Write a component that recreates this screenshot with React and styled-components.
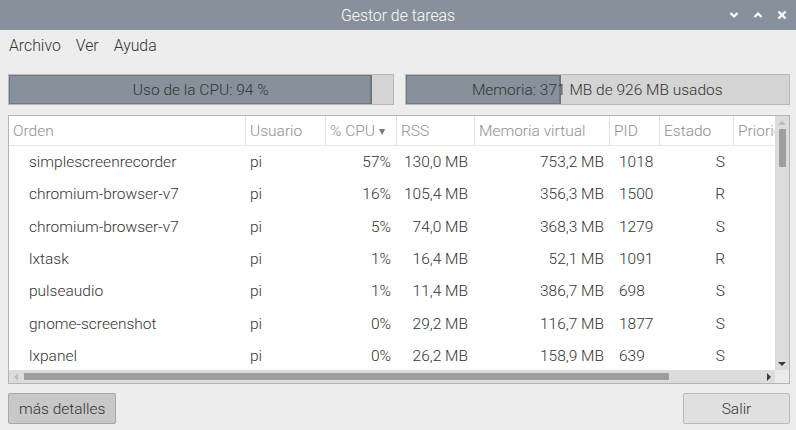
import React from 'react'
import styled, { createGlobalStyle } from 'styled-components'

const GlobalStyle = createGlobalStyle`
  html, body {
    margin: 0;
    padding: 0;
    background: #ededed;
  }
  body {
    font-family: Roboto, "Noto Sans", "Liberation Sans", sans-serif;
    font-size: 15.5px;
    font-weight: 300;
    color: #333;
  }
`;

const columns = [
  { key: 'name', label: 'Orden', width: 236, align: 'left', pad: '0 0 0 20px' },
  { key: 'user', label: 'Usuario', width: 80, align: 'left', pad: '0 0 0 5px' },
  { key: 'cpu', label: '% CPU', width: 71, align: 'right', pad: '0 5px 0 0', sorted: true },
  { key: 'rss', label: 'RSS', width: 78, align: 'right', pad: '0 6px 0 0' },
  { key: 'vm', label: 'Memoria virtual', width: 135, align: 'right', pad: '0 5px 0 0' },
  { key: 'pid', label: 'PID', width: 50, align: 'left', pad: '0 0 0 10px' },
  { key: 'state', label: 'Estado', width: 74, align: 'right', pad: '0 8px 0 0' },
  { key: 'prio', label: 'Prioridad', width: 80, align: 'left', pad: '0' },
];

const processes = [
  { name: 'simplescreenrecorder', user: 'pi', cpu: '57%', rss: '130,0 MB', vm: '753,2 MB', pid: '1018', state: 'S' },
  { name: 'chromium-browser-v7', user: 'pi', cpu: '16%', rss: '105,4 MB', vm: '356,3 MB', pid: '1500', state: 'R' },
  { name: 'chromium-browser-v7', user: 'pi', cpu: '5%', rss: '74,0 MB', vm: '368,3 MB', pid: '1279', state: 'S' },
  { name: 'lxtask', user: 'pi', cpu: '1%', rss: '16,4 MB', vm: '52,1 MB', pid: '1091', state: 'R' },
  { name: 'pulseaudio', user: 'pi', cpu: '1%', rss: '11,4 MB', vm: '386,7 MB', pid: '698', state: 'S' },
  { name: 'gnome-screenshot', user: 'pi', cpu: '0%', rss: '29,2 MB', vm: '116,7 MB', pid: '1877', state: 'S' },
  { name: 'lxpanel', user: 'pi', cpu: '0%', rss: '26,2 MB', vm: '158,9 MB', pid: '639', state: 'S' },
];

const gridTemplate = columns.map(c => `${c.width}px`).join(' ');

function Chevron({ up }) {
  return (
    <svg width="10" height="8" viewBox="0 0 10 8">
      <path d={up ? 'M1.5 6 L5 2.5 L8.5 6' : 'M1.5 2 L5 5.5 L8.5 2'} stroke="#fff" strokeWidth="2.2" fill="none" />
    </svg>
  );
}

function Cross() {
  return (
    <svg width="10" height="10" viewBox="0 0 10 10">
      <path d="M1.5 1.5 L8.5 8.5 M8.5 1.5 L1.5 8.5" stroke="#fff" strokeWidth="2.4" fill="none" />
    </svg>
  );
}

function Arrow({ dir, dark }) {
  const paths = {
    up: 'M0 5 L4 1 L8 5 Z',
    down: 'M0 1 L4 5 L8 1 Z',
    left: 'M5 0 L1 4 L5 8 Z',
    right: 'M1 0 L5 4 L1 8 Z',
  };
  const vertical = dir === 'up' || dir === 'down';
  return (
    <svg width={vertical ? 8 : 6} height={vertical ? 6 : 8} viewBox={vertical ? '0 0 8 6' : '0 0 6 8'}>
      <path d={paths[dir]} fill={dark ? '#3a3a3a' : '#bdbdbd'} />
    </svg>
  );
}

function UsageBar({ percent, label }) {
  return (
    <Bar>
      <BarFill style={{ width: `${percent}%` }} />
      <BarLabel>{label}</BarLabel>
    </Bar>
  );
}

export default function App() {
  return (
    <Window>
      <GlobalStyle />
      <TitleBar>
        <Title>Gestor de tareas</Title>
        <TitleButtons>
          <TitleButton><Chevron /></TitleButton>
          <TitleButton><Chevron up /></TitleButton>
          <TitleButton><Cross /></TitleButton>
        </TitleButtons>
      </TitleBar>

      <MenuBar>
        <MenuItem>Archivo</MenuItem>
        <MenuItem>Ver</MenuItem>
        <MenuItem>Ayuda</MenuItem>
      </MenuBar>

      <Content>
        <Bars>
          <UsageBar percent={94.5} label="Uso de la CPU: 94 %" />
          <UsageBar percent={40.2} label="Memoria: 371 MB de 926 MB usados" />
        </Bars>

        <TableFrame>
          <Viewport>
            <HeaderRow>
              {columns.map((c, i) => (
                <HeaderCell key={c.key} $first={i === 0}>
                  {c.label}
                  {c.sorted && <SortArrow>▾</SortArrow>}
                </HeaderCell>
              ))}
            </HeaderRow>
            {processes.map((p, r) => (
              <Row key={r}>
                {columns.map(c => (
                  <Cell key={c.key} $align={c.align} $pad={c.pad}>{p[c.key]}</Cell>
                ))}
              </Row>
            ))}
          </Viewport>

          <VScroll>
            <ArrowBox><Arrow dir="up" /></ArrowBox>
            <VTrack><VThumb /></VTrack>
            <ArrowBox><Arrow dir="down" dark /></ArrowBox>
          </VScroll>

          <HScroll>
            <ArrowBox $h><Arrow dir="left" /></ArrowBox>
            <HTrack><HThumb /></HTrack>
            <ArrowBox $h><Arrow dir="right" dark /></ArrowBox>
          </HScroll>
          <Corner />
        </TableFrame>

        <Footer>
          <Button $pressed>más detalles</Button>
          <Button>Salir</Button>
        </Footer>
      </Content>
    </Window>
  );
}

const Window = styled.div`
  width: 796px;
  height: 430px;
  background: #ededed;
  display: flex;
  flex-direction: column;
  overflow: hidden;
`;

const TitleBar = styled.div`
  height: 30px;
  flex: none;
  background: #87919b;
  display: flex;
  align-items: center;
  justify-content: center;
  position: relative;
`;

const Title = styled.div`
  color: #fff;
  font-size: 15.8px;
  font-weight: 300;
`;

const TitleButtons = styled.div`
  position: absolute;
  right: 8px;
  top: 0;
  height: 30px;
  display: flex;
  align-items: center;
  gap: 12px;
`;

const TitleButton = styled.div`
  width: 12px;
  height: 12px;
  display: flex;
  align-items: center;
  justify-content: center;
`;

const MenuBar = styled.div`
  height: 30px;
  flex: none;
  display: flex;
  align-items: center;
  gap: 15px;
  padding: 0 0 0 9px;
  font-size: 15.8px;
`;

const MenuItem = styled.span`
  color: #333;
`;

const Content = styled.div`
  flex: 1;
  display: flex;
  flex-direction: column;
  padding: 14px 6px 0 8px;
`;

const Bars = styled.div`
  display: flex;
  gap: 11px;
  height: 31px;
`;

const Bar = styled.div`
  flex: 1;
  position: relative;
  background: #d4d4d4;
  border: 1px solid #b9b9b9;
  overflow: hidden;
  display: flex;
  align-items: center;
  justify-content: center;
`;

const BarFill = styled.div`
  position: absolute;
  left: 0;
  top: 0;
  bottom: 0;
  background: #87919b;
  border-right: 1px solid #6b747d;
  box-shadow: inset 0 0 0 1px #6f7882;
`;

const BarLabel = styled.span`
  position: relative;
  color: #333;
`;

const TableFrame = styled.div`
  margin-top: 10px;
  height: 267px;
  border: 1px solid #b4b4b4;
  background: #fff;
  display: grid;
  grid-template-columns: 1fr 14px;
  grid-template-rows: 1fr 13px;
  overflow: hidden;
`;

const Viewport = styled.div`
  overflow: hidden;
  min-width: 0;
  min-height: 0;
`;

const HeaderRow = styled.div`
  display: grid;
  grid-template-columns: ${gridTemplate};
  height: 29px;
  border-bottom: 1px solid #e4e4e4;
  width: max-content;
`;

const HeaderCell = styled.div`
  display: flex;
  align-items: center;
  padding-left: 4px;
  border-left: ${p => (p.$first ? 'none' : '1px solid #e2e2e2')};
  color: #8f8f8f;
  white-space: nowrap;
  overflow: hidden;
`;

const SortArrow = styled.span`
  margin-left: 4px;
  font-size: 12px;
  color: #777;
`;

const Row = styled.div`
  display: grid;
  grid-template-columns: ${gridTemplate};
  height: 32.3px;
  align-items: center;
  width: max-content;
`;

const Cell = styled.div`
  text-align: ${p => p.$align};
  padding: ${p => p.$pad};
  color: #333;
  white-space: nowrap;
  overflow: hidden;
`;

const VScroll = styled.div`
  background: #dcdcdc;
  display: flex;
  flex-direction: column;
  align-items: center;
`;

const ArrowBox = styled.div`
  flex: none;
  width: ${p => (p.$h ? '13px' : '14px')};
  height: 13px;
  display: flex;
  align-items: center;
  justify-content: center;
`;

const VTrack = styled.div`
  flex: 1;
  width: 100%;
  display: flex;
  justify-content: center;
`;

const VThumb = styled.div`
  width: 7px;
  height: 38px;
  background: #9e9e9e;
  border-radius: 1px;
`;

const HScroll = styled.div`
  background: #dcdcdc;
  display: flex;
  align-items: center;
`;

const HTrack = styled.div`
  flex: 1;
  height: 100%;
  display: flex;
  align-items: center;
  padding: 0 0 0 2px;
`;

const HThumb = styled.div`
  height: 7px;
  width: 645px;
  background: #9e9e9e;
  border-radius: 1px;
`;

const Corner = styled.div`
  background: #ebebeb;
`;

const Footer = styled.div`
  display: flex;
  justify-content: space-between;
  margin-top: 9px;
`;

const Button = styled.button`
  height: 31px;
  min-width: 107px;
  padding: 0 10px;
  font-family: Roboto, "Noto Sans", "Liberation Sans", sans-serif;
  font-size: 15.5px;
  font-weight: 300;
  color: #333;
  background: ${p => (p.$pressed ? '#c8c8c8' : '#e0e0e0')};
  border: 1px solid ${p => (p.$pressed ? '#a8a8a8' : '#b9b9b9')};
  border-radius: 2px;
`;
